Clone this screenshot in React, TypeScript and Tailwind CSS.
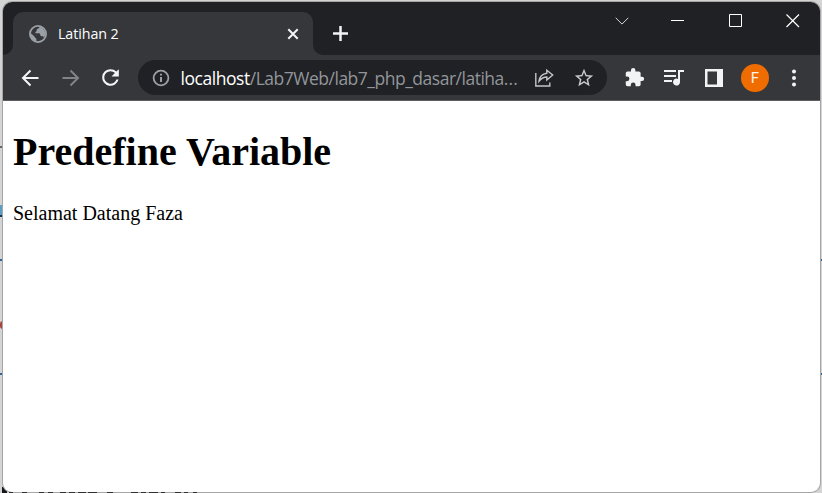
import React from 'react';

function Globe() {
  return (
    <svg width="18" height="18" viewBox="0 0 18 18" className="shrink-0">
      <circle cx="9" cy="9" r="8.1" fill="#36373b" stroke="#9aa0a6" strokeWidth="1.8" />
      <path
        d="M10.4 1.2c.2 1.4-.4 2.2-1.7 2.5-.8.2-1.1.7-1 1.5.1.9-.4 1.4-1.3 1.5v1.6h3.3c1.1 0 1.5.6 1.6 1.6.2 1 .8 1.3 1.7 1.3 1.3 0 1.7.7 2 1.7A8 8 0 0 0 10.4 1.2ZM1.2 7.8l4 3.5c.7.6.5 1.2 1.3 1.7.7.4 1 .8.9 1.7L7.3 17A8.1 8.1 0 0 1 1.2 7.8Z"
        fill="#9aa0a6"
      />
    </svg>
  );
}

function Tab() {
  return (
    <div className="relative mt-[10px] ml-[10px] flex h-[43px] w-[300px] items-center rounded-t-[10px] bg-[#36373b] pl-4">
      <Globe />
      <span className="ml-[11px] w-[219px] text-[14.3px] leading-5 tracking-[-0.1px] text-white">Latihan 2</span>
      <svg width="18" height="18" viewBox="0 0 18 18" className="ml-[7px] shrink-0" stroke="#f4f4f5" strokeWidth="2" fill="none">
        <path d="M4.3 4.3l9.4 9.4M13.7 4.3l-9.4 9.4" />
      </svg>
      <svg width="10" height="10" viewBox="0 0 10 10" className="absolute bottom-0 -left-[10px]">
        <path d="M10 0v10H0A10 10 0 0 0 10 0Z" fill="#36373b" />
      </svg>
      <svg width="10" height="10" viewBox="0 0 10 10" className="absolute -right-[10px] bottom-0">
        <path d="M0 0v10h10A10 10 0 0 1 0 0Z" fill="#36373b" />
      </svg>
    </div>
  );
}

function TitleBar() {
  return (
    <div className="flex h-[53px] shrink-0 bg-[#202124]">
      <Tab />
      <svg width="17" height="17" viewBox="0 0 17 17" className="mt-[23px] ml-[19px]" stroke="#f1f3f4" strokeWidth="2.5">
        <path d="M8.5 1v15M1 8.5h15" />
      </svg>
      <div className="mt-[11px] ml-auto flex h-4 items-center">
        <svg width="14" height="16" viewBox="0 0 14 16" className="mr-[41px]" stroke="#d8d8d9" fill="none">
          <path d="M.7 4.8 7 11.1l6.3-6.3" />
        </svg>
        <svg width="14" height="16" viewBox="0 0 14 16" className="mr-[45px]" stroke="#fff">
          <path d="M1 7.5h13" />
        </svg>
        <svg width="14" height="16" viewBox="0 0 14 16" className="mr-[43px]" stroke="#fff" fill="none">
          <path d="M.5 1.5h12v12H.5Z" />
        </svg>
        <svg width="14" height="16" viewBox="0 0 14 16" className="mr-[20px]" stroke="#fff" fill="none" strokeWidth="1.2">
          <path d="M.5 1.5l12.5 12.5M13 1.5.5 14" />
        </svg>
      </div>
    </div>
  );
}

function AddressBar() {
  return (
    <div className="ml-[15px] flex h-[35px] w-[469px] shrink-0 items-center rounded-full bg-[#202124] pl-[14px]">
      <svg width="18" height="18" viewBox="0 0 18 18" fill="none" stroke="#9aa0a6" className="shrink-0">
        <circle cx="9" cy="9" r="7.4" strokeWidth="1.8" />
        <path d="M9 8v5M9 4.800v1.800" strokeWidth="2" />
      </svg>
      <span className="ml-[10.5px] w-[339.5px] text-[17.5px] leading-6 tracking-[-0.490px] whitespace-nowrap text-[#92969b]">
        <span className="tracking-[-0.450px] text-white">localhost</span>/Lab7Web/lab7_php_dasar/latiha
        <span className="tracking-[0.100px]">...</span>
      </span>
      <svg width="21" height="20" viewBox="0 0 21 20" className="ml-[14px] shrink-0" fill="none" stroke="#c3c5c8" strokeWidth="1.400">
        <path d="M1.800 5v13h14v-3.500" />
        <path d="M12.800 2.200 18.700 7l-5.900 5V9C9.500 9 7.200 10.500 5 13.200c.500-4 3.300-7.400 7.800-8Z" />
      </svg>
      <svg width="22" height="22" viewBox="0 0 24 24" className="ml-[18px] shrink-0" fill="#c7c9cc">
        <path d="m22 9.240-7.190-.620L12 2 9.190 8.630 2 9.240l5.460 4.730L5.820 21 12 17.270 18.180 21l-1.630-7.030L22 9.240zM12 15.400l-3.760 2.270 1-4.280-3.320-2.880 4.380-.380L12 6.100l1.710 4.040 4.380.380-3.320 2.880 1 4.280L12 15.400z" />
      </svg>
    </div>
  );
}

function Toolbar() {
  return (
    <div className="flex h-[46px] shrink-0 items-center border-b border-[#5c5d61] bg-[#36373b]">
      <svg width="24" height="24" viewBox="0 0 24 24" className="ml-[15px] shrink-0" fill="none" stroke="#f4f5f6" strokeWidth="2">
        <path d="M20.500 12H5.500M12.500 4.500 5 12l7.500 7.500" />
      </svg>
      <svg width="24" height="24" viewBox="0 0 24 24" className="ml-[16px] shrink-0" fill="none" stroke="#828387" strokeWidth="2">
        <path d="M4.500 12h15M12.500 4.500 20 12l-7.500 7.500" />
      </svg>
      <svg width="25" height="25" viewBox="0 0 24 24" className="ml-[16px] shrink-0" fill="#f4f5f6">
        <path d="M17.650 6.350A7.950 7.950 0 0 0 12 4a8 8 0 1 0 7.730 10h-2.080A6 6 0 1 1 12 6c1.660 0 3.140.690 4.220 1.780L13 11h7V4l-2.350 2.350z" />
      </svg>
      <AddressBar />
      <svg width="21" height="21" viewBox="0 0 24 24" className="ml-[17px] shrink-0" fill="#f1f3f4">
        <path d="M20.500 11H19V7a2 2 0 0 0-2-2h-4V3.500a2.500 2.500 0 0 0-5 0V5H4a2 2 0 0 0-1.990 2v3.800H3.500a2.700 2.700 0 0 1 0 5.400H2V20a2 2 0 0 0 2 2h3.800v-1.500a2.700 2.700 0 0 1 5.400 0V22H17a2 2 0 0 0 2-2v-4h1.500a2.500 2.500 0 0 0 0-5z" />
      </svg>
      <svg width="21" height="18" viewBox="0 0 21 18" className="ml-[18px] shrink-0" fill="#f1f3f4">
        <path d="M1 1h12v2H1zM1 6h12v2H1zM1 11h8v2H1zM15 1h6v2h-4v10a3.500 3.500 0 1 1-2-3.100Z" />
      </svg>
      <svg width="18" height="18" viewBox="0 0 18 18" className="ml-[21px] shrink-0" fill="#f1f3f4">
        <path fillRule="evenodd" d="M0 0h18v18H0ZM2.500 2.500v13H12v-13Z" />
      </svg>
      <div className="ml-[18px] flex size-7 shrink-0 items-center justify-center rounded-full bg-[#ef6c00] text-[15px] text-[#fff3e6]">
        <span className="pt-px [font-family:Roboto,sans-serif]">F</span>
      </div>
      <svg width="6" height="18" viewBox="0 0 6 18" className="ml-[22px] shrink-0" fill="#f1f3f4">
        <circle cx="3" cy="2.500" r="2" />
        <circle cx="3" cy="9" r="2" />
        <circle cx="3" cy="15.500" r="2" />
      </svg>
    </div>
  );
}

// Slivers of the document text visible beneath the window's lower edge: [gap before, width]
const textSlivers = [
  [0, 4], [9, 5], [12, 5], [4, 5], [7, 6], [3, 6], [3, 8], [2, 9], [10, 6],
  [18, 7], [3, 5], [3, 9], [3, 4], [10, 6], [3, 4], [5, 4],
];

export default function App() {
  return (
    <div className="relative h-[493px] w-[822px] overflow-hidden bg-[#d4d4d4] pt-[2px] pl-[3px] [font-family:'Open_Sans',sans-serif]">
      <div className="absolute top-[146px] left-0 h-[2px] w-[3px] bg-[#666]" />
      <div className="absolute top-[259px] left-0 h-[2px] w-full bg-[#2f6597]" />
      <div className="absolute top-[373px] left-0 h-[2px] w-full bg-[#2f6597]" />
      <div className="absolute top-[205px] left-0 h-[11px] w-[2px] bg-[#5b9bc5]" />
      <div className="absolute top-[215px] left-0 h-[2px] w-[2px] bg-[#17344d]" />
      <div className="absolute top-[316px] left-[2px] h-[2px] w-px bg-[#b04a40]" />
      <div className="absolute top-[321px] left-0 h-[8px] w-[3px] rounded-l-full bg-[#a5463d]" />
      <div className="absolute top-[487px] left-[2px] h-[6px] w-[5px] bg-[#14171c]" />
      <div className="relative flex h-[490px] w-[817px] flex-col overflow-hidden rounded-[9px] bg-white shadow-[0_0_0_1px_#a6a6a6]">
        <TitleBar />
        <Toolbar />
        <main className="px-[10px] text-black [font-family:'Liberation_Serif',serif]">
          <h1 className="mt-[28px] text-[40px] leading-[46px] font-bold">Predefine Variable</h1>
          <p className="mt-[27px] text-[20px] leading-[23px]">Selamat Datang Faza</p>
        </main>
      </div>
      <div className="absolute bottom-0 left-[9px] flex h-px">
        {textSlivers.map(([gap, width], i) => (
          <span key={i} className="h-px shrink-0 bg-[#303030]" style={{ marginLeft: gap, width }} />
        ))}
      </div>
    </div>
  );
}
